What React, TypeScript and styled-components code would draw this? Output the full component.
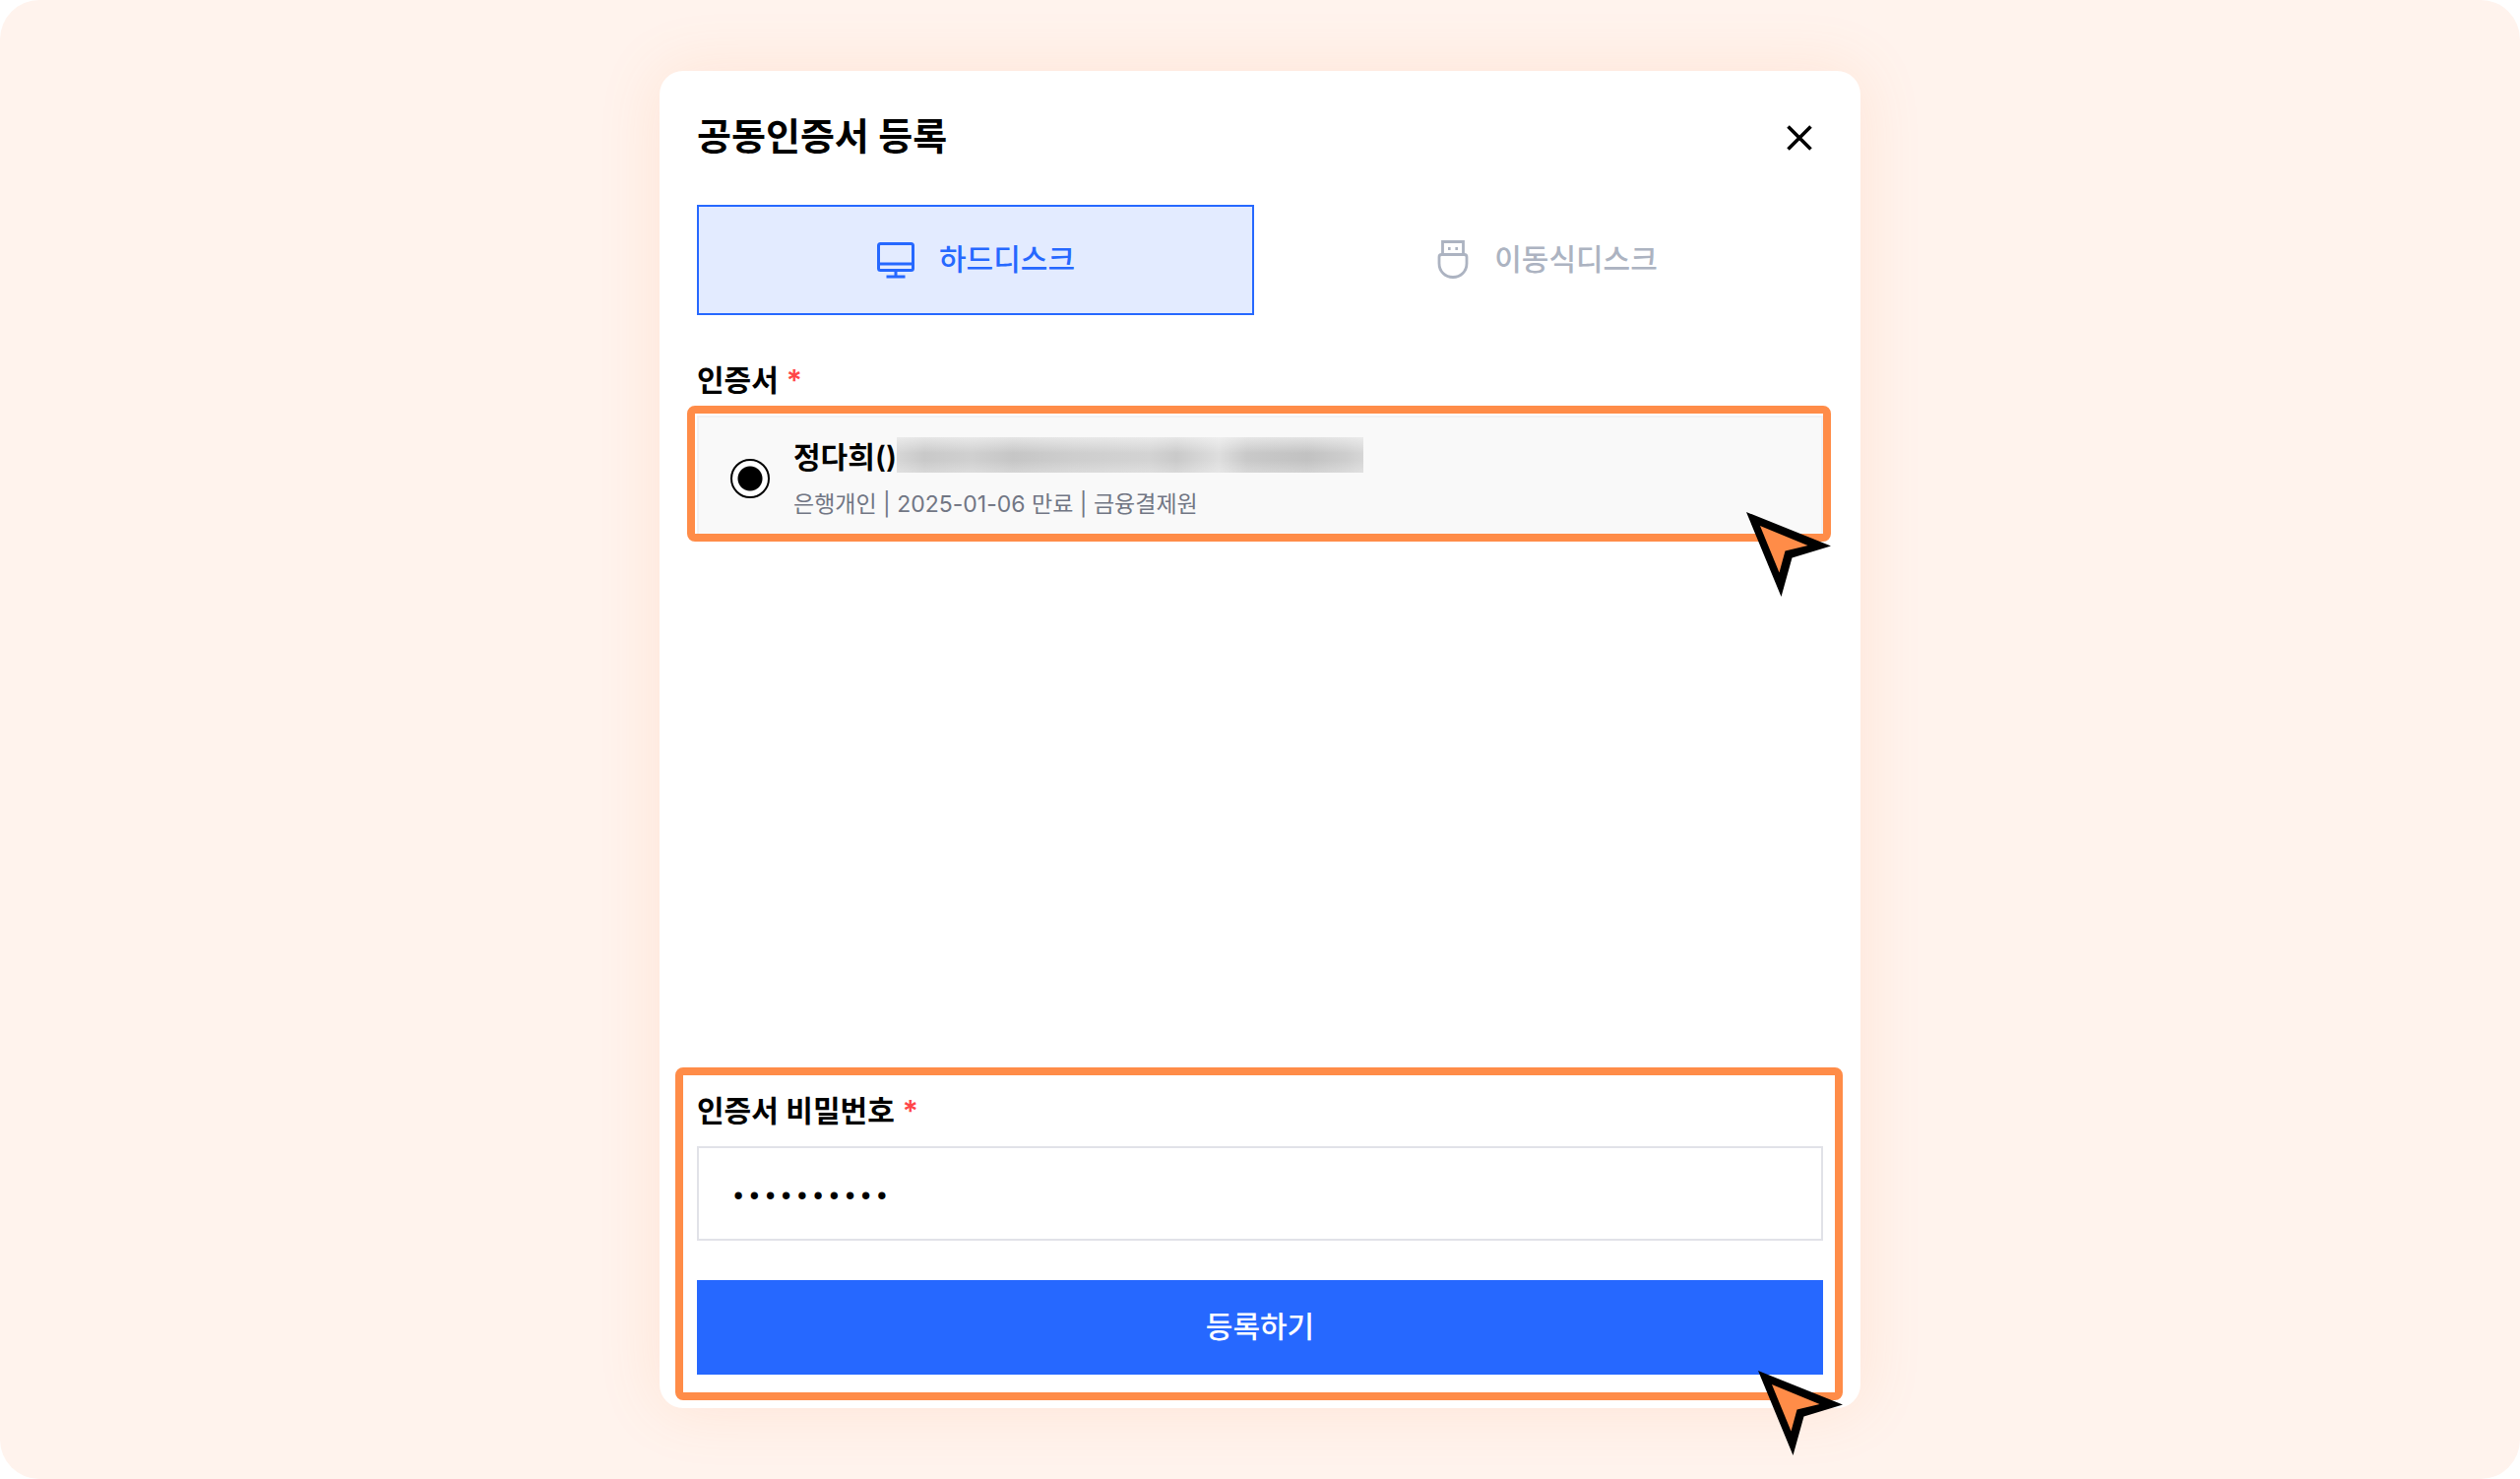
import React, { useId, useState } from "react";
import styled, { createGlobalStyle, css } from "styled-components";

const color = {
  page: "#fff3ed",
  ink: "#000",
  blue: "#2668ff",
  blueTint: "#e3ebff",
  muted: "#acb3c1",
  sub: "#717684",
  line: "#e1e2e8",
  accent: "#ff8c48",
  danger: "#ff4548",
};

const GlobalStyle = createGlobalStyle`
  *, *::before, *::after { box-sizing: border-box; }
  body {
    margin: 0;
    background: #fff;
    color: ${color.ink};
    font-family: Inter, "Noto Sans CJK KR", sans-serif;
  }
  button, input { font: inherit; color: inherit; }
`;

const Page = styled.main`
  min-height: 100vh;
  display: flex;
  flex-direction: column;
  align-items: center;
  padding: 72px 24px;
  border-radius: 40px;
  background: ${color.page};
`;

const Card = styled.form`
  flex: 1;
  width: 100%;
  max-width: 1220px;
  display: flex;
  flex-direction: column;
  padding: 34px 38px;
  border-radius: 24px;
  background: #fff;
  box-shadow: 0 0 64px rgba(255, 140, 72, 0.14);
`;

const Header = styled.header`
  display: flex;
  align-items: flex-start;
  justify-content: space-between;
  height: 66px;
  margin-bottom: 36px;
`;

const Title = styled.h1`
  margin: 0;
  padding-top: 4px;
  font-size: 38px;
  line-height: 56px;
  font-weight: 600;
`;

const CloseButton = styled.button`
  display: grid;
  place-items: center;
  width: 48px;
  height: 68px;
  padding: 0;
  border: 0;
  background: none;
  cursor: pointer;
`;

const bodyText = css`
  font-size: 30px;
  line-height: 44px;
  font-weight: 600;
`;

const actionText = css`
  font-size: 30px;
  line-height: 44px;
  font-weight: 500;
`;

const Tabs = styled.div`
  display: grid;
  grid-template-columns: 1fr 1fr;
  gap: 12px;
  margin-bottom: 44px;
`;

const Tab = styled.button<{ $active: boolean }>`
  ${actionText}
  display: flex;
  align-items: center;
  justify-content: center;
  gap: 24px;
  height: 112px;
  padding: 0 0 2px;
  border: 2px solid transparent;
  background: none;
  color: ${color.muted};
  cursor: pointer;
  ${(p) =>
    p.$active &&
    css`
      border-color: ${color.blue};
      background: ${color.blueTint};
      color: ${color.blue};
    `}
`;

const labelText = css`
  ${bodyText}
  display: flex;
  gap: 8px;
  padding: 0;
`;

const Label = styled.label`
  ${labelText}
`;

const Legend = styled.legend`
  ${labelText}
  margin-bottom: 14px;
`;

const Required = styled.span`
  color: ${color.danger};
`;

const highlightFrame = css`
  position: relative;
  &::after {
    content: "";
    position: absolute;
    border: 8px solid ${color.accent};
    border-radius: 8px;
    pointer-events: none;
  }
`;

const CertList = styled.fieldset`
  flex: 1;
  min-width: 0;
  margin: 0;
  padding: 0 0 80px;
  border: 0;
`;

const CertItem = styled.label`
  ${highlightFrame}
  display: flex;
  align-items: center;
  gap: 24px;
  height: 128px;
  padding: 0 32px;
  border: 2px solid #f1f2f4;
  background: #f9f9f9;
  cursor: pointer;
  &::after {
    inset: -12px -10px -2px -12px;
  }
`;

const Radio = styled.input`
  appearance: none;
  flex: none;
  width: 40px;
  height: 40px;
  margin: 0;
  border: 2px solid #000;
  border-radius: 50%;
  background: #fff;
  &:checked {
    background: radial-gradient(circle, #000 12px, #fff 13px);
  }
`;

const CertInfo = styled.span`
  display: flex;
  flex-direction: column;
  gap: 12px;
`;

const CertName = styled.span`
  ${bodyText}
  display: flex;
  align-items: flex-start;
  line-height: 40px;
`;

const CertMeta = styled.span`
  font-size: 23px;
  line-height: 32px;
  color: ${color.sub};
`;

const Redaction = styled.span`
  width: 474px;
  height: 36px;
  background:
    linear-gradient(rgba(249, 249, 249, 0.6), rgba(249, 249, 249, 0) 45%, rgba(249, 249, 249, 0) 65%, rgba(249, 249, 249, 0.3)),
    linear-gradient(90deg, #d6d6d6, #c9c9c9 6%, #d0d0d0 16%, #c6c6c6 25%, #cecece 38%, #d3d3d3 54%, #cacaca 60%, #dedede 69%, #c9c9c9 75%, #c2c2c2 88%, #cdcdcd 96%, #d6d6d6);
`;

const Submission = styled.section`
  ${highlightFrame}
  display: flex;
  flex-direction: column;
  &::after {
    inset: -22px -20px -26px -22px;
  }
`;

const PasswordInput = styled.input`
  width: 100%;
  height: 96px;
  margin: 14px 0 40px;
  padding: 8px 32px 0;
  border: 2px solid ${color.line};
  border-radius: 0;
  background: #fff;
  font-family: "Liberation Mono", monospace;
  font-size: 27px;
  outline: none;
`;

const SubmitButton = styled.button`
  ${actionText}
  height: 96px;
  padding: 0 0 2px;
  border: 0;
  background: ${color.blue};
  color: #fff;
  cursor: pointer;
`;

const Pointer = styled.svg<{ $right: number; $bottom: number }>`
  position: absolute;
  z-index: 1;
  right: ${(p) => p.$right}px;
  bottom: ${(p) => p.$bottom}px;
  width: 86px;
  height: 86px;
  pointer-events: none;
`;

function PointerMark({ right, bottom }: { right: number; bottom: number }) {
  return (
    <Pointer $right={right} $bottom={bottom} viewBox="0 0 86 86" aria-hidden="true">
      <path d="M0 0 86 34.5 46.5 46.5 35.5 86Z" fill="#000" />
      <path d="M14 14 62.5 34 39.5 39.5 33.5 61.5Z" fill={color.accent} />
    </Pointer>
  );
}

function CloseIcon() {
  return (
    <svg width="26" height="26" viewBox="0 0 26 26" fill="none" stroke="currentColor" strokeWidth="3.6" aria-hidden="true">
      <path d="M1.5 1.5 24.5 24.5M24.5 1.5 1.5 24.5" />
    </svg>
  );
}

function MonitorIcon() {
  return (
    <svg width="40" height="40" viewBox="0 0 40 40" fill="none" stroke="currentColor" strokeWidth="3" aria-hidden="true">
      <rect x="2.5" y="4.5" width="35" height="27" rx="2" />
      <path d="M2.5 25H37.5M20 31V38M10.5 38H29.5" />
    </svg>
  );
}

function UsbIcon() {
  return (
    <svg width="40" height="40" viewBox="0 0 40 40" fill="none" stroke="currentColor" strokeWidth="2.8" aria-hidden="true">
      <path d="M11.5 15.5V2.5H32.5V15.5" />
      <path d="M10.5 15.5H33.5Q36 15.5 36 18V24.5C36 32.5 30 38.5 22 38.5S8 32.5 8 24.5V18Q8 15.5 10.5 15.5Z" />
      <path d="M17 9.5h2.600M24.4 9.5H27" />
    </svg>
  );
}

export default function App() {
  const [disk, setDisk] = useState<"hard" | "removable">("hard");
  const [password, setPassword] = useState("0123456789");
  const passwordId = useId();

  return (
    <>
      <GlobalStyle />
      <Page>
        <Card onSubmit={(e) => e.preventDefault()}>
          <Header>
            <Title>공동인증서 등록</Title>
            <CloseButton type="button" aria-label="닫기">
              <CloseIcon />
            </CloseButton>
          </Header>

          <Tabs role="tablist">
            <Tab type="button" role="tab" aria-selected={disk === "hard"} $active={disk === "hard"} onClick={() => setDisk("hard")}>
              <MonitorIcon />
              하드디스크
            </Tab>
            <Tab
              type="button"
              role="tab"
              aria-selected={disk === "removable"}
              $active={disk === "removable"}
              onClick={() => setDisk("removable")}
            >
              <UsbIcon />
              이동식디스크
            </Tab>
          </Tabs>

          <CertList>
            <Legend>
              인증서 <Required>*</Required>
            </Legend>
            <CertItem>
              <Radio type="radio" name="certificate" defaultChecked />
              <CertInfo>
                <CertName>
                  정다희()
                  <Redaction />
                </CertName>
                <CertMeta>은행개인 | 2025-01-06 만료 | 금융결제원</CertMeta>
              </CertInfo>
              <PointerMark right={-10} bottom={-58} />
            </CertItem>
          </CertList>

          <Submission>
            <Label htmlFor={passwordId}>
              인증서 비밀번호 <Required>*</Required>
            </Label>
            <PasswordInput
              id={passwordId}
              type="password"
              autoComplete="off"
              value={password}
              onChange={(e) => setPassword(e.target.value)}
            />
            <SubmitButton type="submit">등록하기</SubmitButton>
            <PointerMark right={-20} bottom={-82} />
          </Submission>
        </Card>
      </Page>
    </>
  );
}
